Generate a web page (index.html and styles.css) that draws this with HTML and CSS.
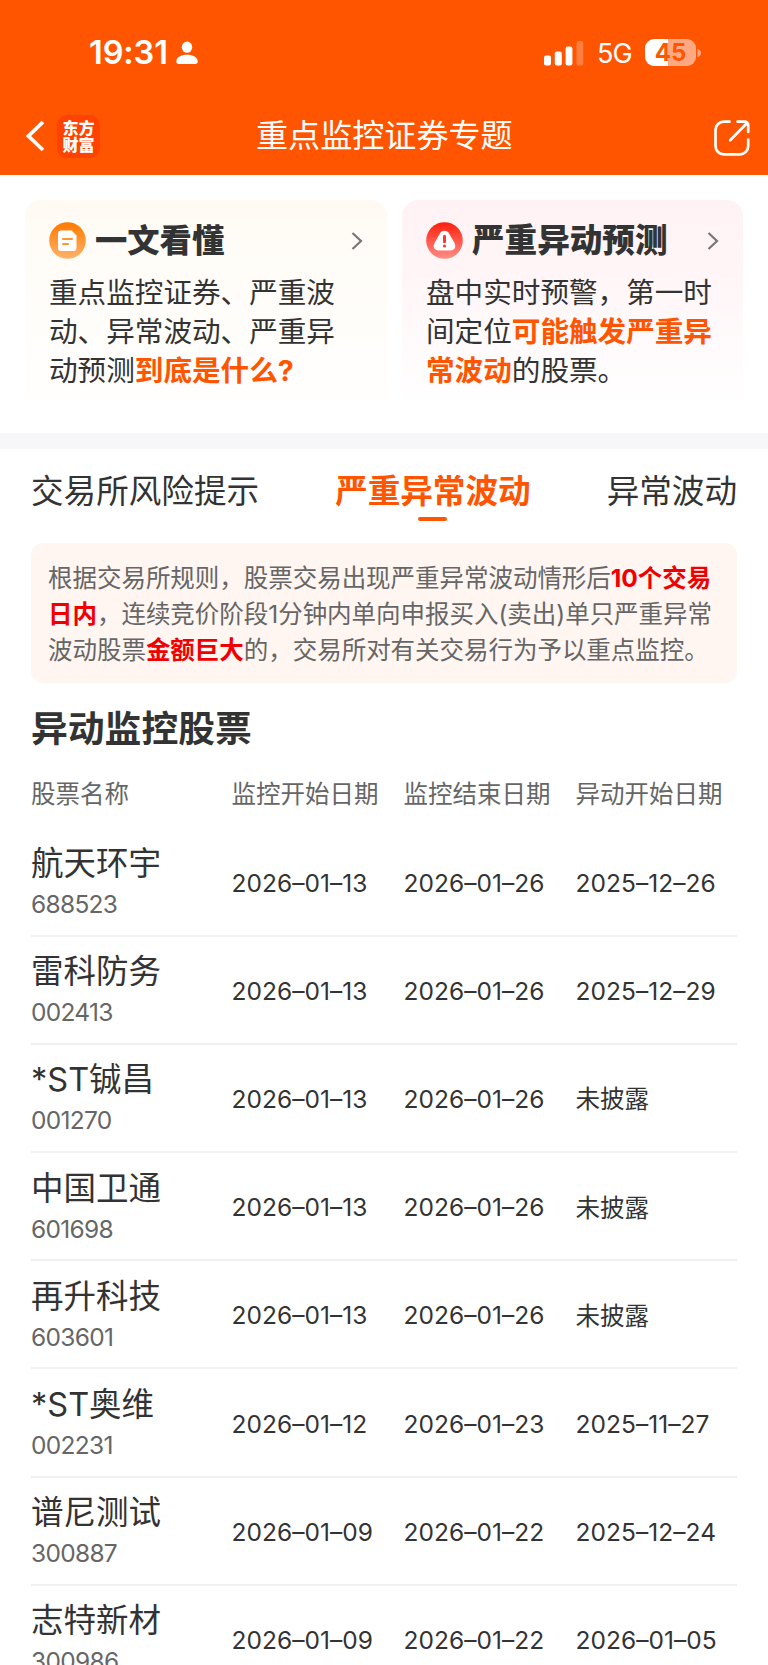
FILE: index.html
```
<!DOCTYPE html>
<html lang="zh-CN">
<head>
<meta charset="utf-8">
<title>重点监控证券专题</title>
<link rel="stylesheet" href="styles.css">
</head>
<body>
<header class="top">
  <div class="status">
    <span class="time">19:31</span>
    <svg class="person" width="22" height="24" viewBox="0 0 22 24" fill="#fff"><ellipse cx="11" cy="6.2" rx="5.2" ry="5.6"/><path d="M0.3 20.5C0.3 16.5 5 13.8 11 13.8s10.700 2.700 10.700 6.700c0 1.600-.8 2.500-2.300 2.500H2.600C1.100 23 .3 22.100.3 20.500z"/></svg>
    <div class="status-right">
      <svg class="signal" width="40" height="26" viewBox="0 0 40 26" fill="#fff"><rect x="0" y="15.500" width="7" height="10" rx="2"/><rect x="10.800" y="11.500" width="7" height="14" rx="2"/><rect x="21.600" y="6.500" width="6.800" height="19" rx="2"/><rect x="32.500" y="1" width="6.800" height="24.500" rx="2" opacity=".25"/></svg>
      <span class="net">5G</span>
      <span class="battery">45</span>
      <svg class="nub" width="5" height="10" viewBox="0 0 5 10"><path d="M.5 1C2.800 1.500 4 3 4 5s-1.200 3.500-3.500 4z" fill="#ffa983"/></svg>
    </div>
  </div>
  <nav class="nav">
    <svg class="back" width="20" height="32" viewBox="0 0 20 32" fill="none" stroke="#fff" stroke-width="3.800"><path d="M18 2 3.500 16 18 30"/></svg>
    <div class="logo">东方<br>财富</div>
    <h1 class="title">重点监控证券专题</h1>
    <svg class="share" width="36" height="36" viewBox="0 0 36 36" fill="none" stroke="#fff" stroke-width="2.700" stroke-linecap="round" stroke-linejoin="round"><path d="M15.500 1.700H10A8.300 8.300 0 0 0 1.500 10v16A8.300 8.300 0 0 0 10 34.300h15.500A8.300 8.300 0 0 0 34.200 26v-6.500M23.500 1.700h7.500a3.200 3.200 0 0 1 3.200 3.200v7M32.800 3.200 16.200 20.200"/></svg>
  </nav>
</header>

<section class="cards">
  <article class="card card-guide">
    <div class="card-head">
      <svg width="37" height="37" viewBox="0 0 37 37"><defs><linearGradient id="go" x1="0" y1="0" x2="0" y2="1"><stop offset="0" stop-color="#ff7a00"/><stop offset="1" stop-color="#ffb26a"/></linearGradient></defs><circle cx="18.500" cy="18.500" r="18.300" fill="url(#go)"/><path d="M12 8.500h10.500l5 5V26a3 3 0 0 1-3 3H12a3 3 0 0 1-3-3V11.500a3 3 0 0 1 3-3z" fill="#fff"/><path d="M14 17h9M14 22h5" stroke="#ff9530" stroke-width="2" stroke-linecap="round"/></svg>
      <h2 class="card-title">一文看懂</h2>
      <svg class="more" width="12" height="18" viewBox="0 0 12 18" fill="none" stroke="#777" stroke-width="2.200"><path d="M1.500 1 10 9 1.500 17"/></svg>
    </div>
    <p class="card-text">重点监控证券、严重波<br>动、异常波动、严重异<br>动预测<b>到底是什么?</b></p>
  </article>
  <article class="card card-predict">
    <div class="card-head">
      <svg width="37" height="37" viewBox="0 0 37 37"><defs><linearGradient id="gr" x1="0" y1="0" x2="0" y2="1"><stop offset="0" stop-color="#ff1e0c"/><stop offset="1" stop-color="#ff8e86"/></linearGradient></defs><circle cx="18.500" cy="18.500" r="18.300" fill="url(#gr)"/><path d="M18.500 8.800c2.300 0 3.700 1.200 4.900 3.200l4.800 8.500c2.300 4.300.8 8-4 8H12.800c-4.800 0-6.300-3.700-4-8L13.600 12c1.200-2 2.600-3.200 4.900-3.200z" fill="#fff"/><path d="M18.500 14.300v5.400" stroke="#f5383a" stroke-width="3" stroke-linecap="round"/><circle cx="18.500" cy="24" r="1.600" fill="#f5383a"/></svg>
      <h2 class="card-title">严重异动预测</h2>
      <svg class="more" width="12" height="18" viewBox="0 0 12 18" fill="none" stroke="#777" stroke-width="2.200"><path d="M1.500 1 10 9 1.500 17"/></svg>
    </div>
    <p class="card-text">盘中实时预警，第一时<br>间定位<b>可能触发严重异</b><br><b>常波动</b>的股票。</p>
  </article>
</section>

<main class="panel">
  <div class="tabs">
    <span class="tab">交易所风险提示</span>
    <span class="tab active">严重异常波动</span>
    <span class="tab">异常波动</span>
  </div>
  <p class="notice">根据交易所规则，股票交易出现严重异常波动情形后<b>10个交易</b><br><b>日内</b>，连续竞价阶段1分钟内单向申报买入(卖出)单只严重异常<br>波动股票<b>金额巨大</b>的，交易所对有关交易行为予以重点监控。</p>
  <h2 class="section-title">异动监控股票</h2>
  <div class="row head"><span>股票名称</span><span>监控开始日期</span><span>监控结束日期</span><span>异动开始日期</span></div>
  <div class="row"><div class="stock"><span class="name">航天环宇</span><span class="code">688523</span></div><span class="date">2026–01–13</span><span class="date">2026–01–26</span><span class="date">2025–12–26</span></div>
  <div class="row"><div class="stock"><span class="name">雷科防务</span><span class="code">002413</span></div><span class="date">2026–01–13</span><span class="date">2026–01–26</span><span class="date">2025–12–29</span></div>
  <div class="row"><div class="stock"><span class="name">*ST铖昌</span><span class="code">001270</span></div><span class="date">2026–01–13</span><span class="date">2026–01–26</span><span>未披露</span></div>
  <div class="row"><div class="stock"><span class="name">中国卫通</span><span class="code">601698</span></div><span class="date">2026–01–13</span><span class="date">2026–01–26</span><span>未披露</span></div>
  <div class="row"><div class="stock"><span class="name">再升科技</span><span class="code">603601</span></div><span class="date">2026–01–13</span><span class="date">2026–01–26</span><span>未披露</span></div>
  <div class="row"><div class="stock"><span class="name">*ST奥维</span><span class="code">002231</span></div><span class="date">2026–01–12</span><span class="date">2026–01–23</span><span class="date">2025–11–27</span></div>
  <div class="row"><div class="stock"><span class="name">谱尼测试</span><span class="code">300887</span></div><span class="date">2026–01–09</span><span class="date">2026–01–22</span><span class="date">2025–12–24</span></div>
  <div class="row"><div class="stock"><span class="name">志特新材</span><span class="code">300986</span></div><span class="date">2026–01–09</span><span class="date">2026–01–22</span><span class="date">2026–01–05</span></div>
</main>
</body>
</html>
```

FILE: styles.css
```
* { box-sizing: border-box; margin: 0; padding: 0; }
html, body { height: 1665px; overflow: hidden; }
body {
  width: 768px;
  background: #fff;
  color: #333;
  font-family: Inter, "Noto Sans CJK SC", sans-serif;
  white-space: nowrap;
}
svg { display: block; flex: none; }

.top { height: 175px; background: #ff5500; color: #fff; }
.status { display: flex; align-items: center; height: 105px; padding: 0 66px 0 89px; }
.time { width: 87px; font-size: 32.500px; font-weight: 600; line-height: 40px; letter-spacing: -0.1px; padding-top: 1px; }
.status-right { display: flex; align-items: center; margin-left: auto; }
.signal { margin-right: 13px; }
.net { width: 48px; padding-top: 2px; font-size: 27px; line-height: 32px; letter-spacing: -0.8px; }
.battery {
  width: 51px; height: 27px; border-radius: 9px;
  background: linear-gradient(90deg, #fff 23px, #ffa983 23px);
  color: #ff5500; font-size: 24px; font-weight: 700; line-height: 27px; text-align: center;
}
.nub { margin-left: 1px; }
.nav { display: flex; align-items: center; height: 62px; padding: 0 18px 0 25px; }
.logo {
  width: 43px; height: 43px; margin-left: 12px; padding-top: 5px; border-radius: 10px;
  background: #ff4200; font-size: 16px; font-weight: 900; line-height: 17px; text-align: center;
}
.title { margin-left: 156px; font-size: 32.100px; font-weight: 400; line-height: 46px; }
.share { margin-left: auto; margin-top: 4px; }

.cards { display: flex; align-items: flex-start; gap: 15px; height: 274px; padding: 25px 25px 0; border-bottom: 16px solid #f7f7f9; }
.card { border-radius: 16px; padding: 22px 24px 0 24px; }
.card-guide { width: 362px; height: 200px; background: linear-gradient(#fff9f2, #fffcf7 20%, #fffefd); border-radius: 16px 16px 0 0; }
.card-predict { width: 341px; height: 211px; background: linear-gradient(#fff2f4, #fff6f8 40%, #fff); }
.card-head { display: flex; align-items: center; height: 37px; }
.card-title { margin-left: 9px; font-size: 32.600px; font-weight: 900; line-height: 37px; }
.card-guide .card-title { font-size: 32.300px; }
.more { margin-left: auto; }
.card-text { margin-top: 14px; font-size: 28.600px; line-height: 39px; }
.card-text b { color: #ff5500; }

.panel { padding: 0 31px; }
.tabs { display: flex; justify-content: space-between; height: 94px; padding-top: 19px; }
.tab { font-size: 32.600px; line-height: 46px; }
.active { display: flex; flex-direction: column; align-items: center; color: #ff5500; font-weight: 700; }
.active::after { content: ""; width: 29px; height: 4px; margin-top: 3px; border-radius: 2px; background: #ff5500; }
.notice {
  height: 140px; padding: 18px 17px 0; border-radius: 12px; background: #fff5f1;
  color: #666; font-size: 24.500px; line-height: 35.800px; letter-spacing: -0.03px;
}
.notice b { color: #f00000; }
.section-title { height: 89px; padding-top: 20px; font-size: 36.800px; line-height: 52px; }
.row {
  display: grid; grid-template-columns: 200.500px 172px 172px 1fr; align-items: center;
  height: 108.200px; border-bottom: 2px solid #f1f1f1; font-size: 24.500px;
}
.head { height: 40px; border: 0; color: #666; margin-bottom: 16.500px; }
.date { padding-top: 2px; letter-spacing: 0.05px; }
.stock { display: flex; flex-direction: column; }
.name { font-size: 32.500px; line-height: 46px; }
.code { color: #666; line-height: 34px; letter-spacing: -0.7px; padding-bottom: 1px; }
```
